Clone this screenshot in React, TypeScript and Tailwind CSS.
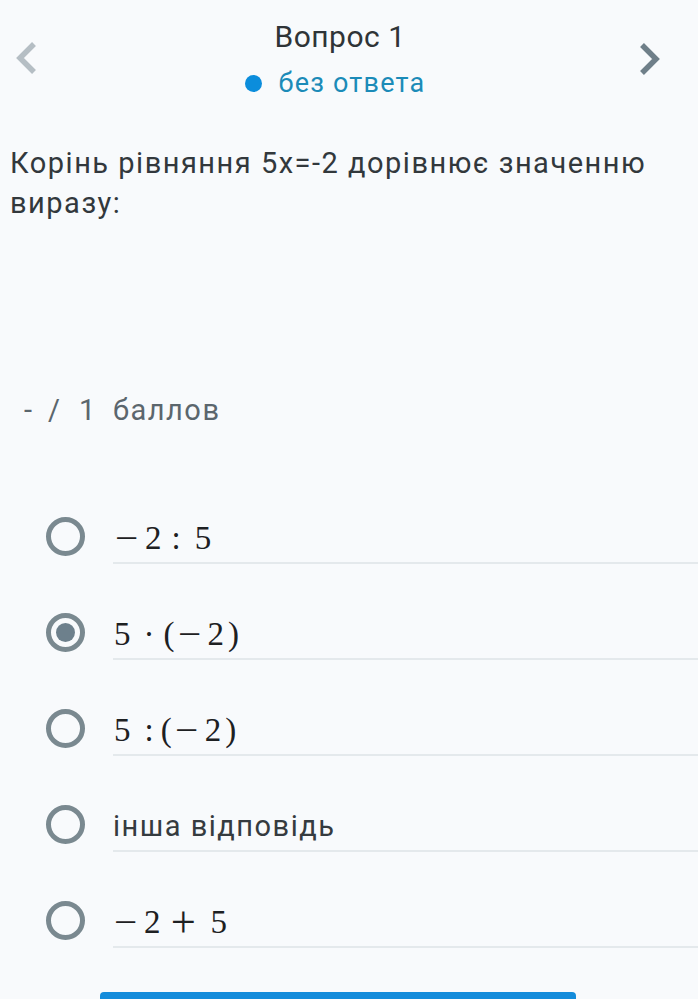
import React from "react";

const serif = { fontFamily: "'Liberation Serif', 'Times New Roman', serif" };

function Minus() {
  return (
    <span className="inline-block w-[30px]">
      <span className="inline-block origin-left scale-x-[1.25]">−</span>
    </span>
  );
}

function Plus() {
  return (
    <span className="inline-block w-[26px] ml-[10px] text-center">
      <span className="inline-block scale-[1.35]">+</span>
    </span>
  );
}

function Math1() {
  return (
    <span className="pl-[2px]">
      <Minus />
      <span>2</span>
      <span className="ml-[10px]">:</span>
      <span className="ml-[14px]">5</span>
    </span>
  );
}

function Math2() {
  return (
    <span className="pl-[1px]">
      <span>5</span>
      <span className="ml-[13px]">·</span>
      <span className="ml-[9px]">(</span>
      <span className="ml-[3px]"><Minus /></span>
      <span>2</span>
      <span className="ml-[4px]">)</span>
    </span>
  );
}

function Math3() {
  return (
    <span className="pl-[1px]">
      <span>5</span>
      <span className="ml-[14px]">:</span>
      <span className="ml-[7px]">(</span>
      <span className="ml-[3px]"><Minus /></span>
      <span>2</span>
      <span className="ml-[4px]">)</span>
    </span>
  );
}

function Math5() {
  return (
    <span className="pl-[1px]">
      <Minus />
      <span>2</span>
      <Plus />
      <span className="ml-[14px]">5</span>
    </span>
  );
}

const options: { node: React.ReactNode; math: boolean; checked: boolean }[] = [
  { node: <Math1 />, math: true, checked: false },
  { node: <Math2 />, math: true, checked: true },
  { node: <Math3 />, math: true, checked: false },
  { node: "інша відповідь", math: false, checked: false },
  { node: <Math5 />, math: true, checked: false },
];

export default function App() {
  return (
    <div
      className="w-[698px] h-[999px] overflow-hidden bg-[#f8fafc] relative"
      style={{ fontFamily: "Roboto, 'Noto Sans', sans-serif" }}
    >
      {/* Header */}
      <div className="flex items-start">
        <div className="pl-[15px] pt-[41px] w-[56px]">
          <svg width="22" height="34" viewBox="0 0 22 34">
            <path d="M19 3 L5 17 L19 31" fill="none" stroke="#b5bec4" strokeWidth="5.5" />
          </svg>
        </div>
        <div className="flex-1 flex flex-col items-center pt-[19px]">
          <div className="text-[30px] leading-[36px] text-[#2f3437] tracking-[0.5px]">Вопрос 1</div>
          <div className="flex items-center h-[32px] mt-[12px] mr-[10px]">
            <span className="w-[17px] h-[17px] rounded-full bg-[#0b8ddc] inline-block" />
            <span className="ml-[17px] text-[27px] leading-[32px] text-[#1b8bb8] tracking-[1.2px]">без ответа</span>
          </div>
        </div>
        <div className="pr-[37px] pt-[42px] w-[74px] flex justify-end">
          <svg width="22" height="34" viewBox="0 0 22 34">
            <path d="M3 3 L17 17 L3 31" fill="none" stroke="#6f7f89" strokeWidth="5.5" />
          </svg>
        </div>
      </div>

      {/* Question */}
      <div className="pl-[10px] pr-[8px] mt-[44px] text-[29px] leading-[40px] text-[#32383c] tracking-[1.5px]">
        Корінь рівняння 5х=-2 дорівнює значенню виразу:
      </div>

      {/* Score */}
      <div className="pl-[24px] mt-[167px] text-[29px] leading-[40px] text-[#5b666d] flex tracking-[1.5px]">
        <span className="w-[24px]">-</span>
        <span className="w-[31px]">/</span>
        <span className="w-[34px]">1</span>
        <span>баллов</span>
      </div>

      {/* Options */}
      <div className="mt-[69px] flex flex-col">
        {options.map((o, i) => (
          <div key={i} className="flex h-[96px]">
            <div className="w-[113px] pl-[46px] pt-[18px]">
              <div className="w-[39px] h-[39px] rounded-full border-[5px] border-[#7a8990] flex items-center justify-center">
                {o.checked && <div className="w-[19px] h-[19px] rounded-full bg-[#6d808c]" />}
              </div>
            </div>
            <div className="flex-1 h-[65px] border-b-[2px] border-[#e4e9ec] pt-[19px]">
              {o.math ? (
                <div className="text-[33px] leading-[40px] text-[#1d2022] whitespace-nowrap" style={serif}>
                  {o.node}
                </div>
              ) : (
                <div className="text-[29px] leading-[40px] text-[#353b3f] tracking-[1.5px]">{o.node}</div>
              )}
            </div>
          </div>
        ))}
      </div>

      {/* Button */}
      <div className="absolute left-[100px] top-[992px] w-[476px] h-[20px] rounded-[4px] bg-[#148cdb]" />
    </div>
  );
}
